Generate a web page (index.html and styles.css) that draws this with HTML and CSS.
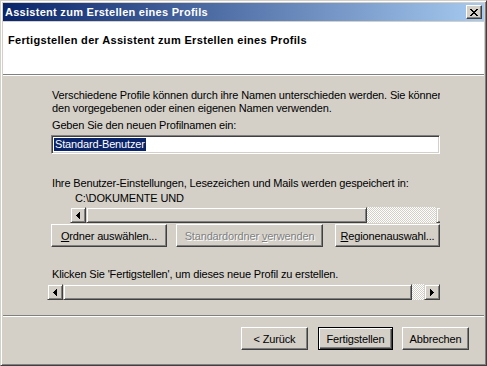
FILE: index.html
```html
<!DOCTYPE html>
<html lang="de">
<head>
    <meta charset="UTF-8">
    <title>Assistent zum Erstellen eines Profils</title>
    <link rel="stylesheet" href="styles.css">
</head>
<body>
    <div class="window">
        <div class="titlebar">
            <span class="title">Assistent zum Erstellen eines Profils</span>
            <button class="close" aria-label="Schließen">
                <svg width="8" height="7" viewBox="0 0 8 7" shape-rendering="crispEdges">
                    <path d="M0 0h2v1H0zM6 0h2v1H6zM1 1h2v1H1zM5 1h2v1H5zM2 2h4v1H2zM3 3h2v1H3zM2 4h4v1H2zM1 5h2v1H1zM5 5h2v1H5zM0 6h2v1H0zM6 6h2v1H6z" fill="#000"/>
                </svg>
            </button>
        </div>

        <div class="header">
            <h1>Fertigstellen der Assistent zum Erstellen eines Profils</h1>
        </div>

        <div class="content">
            <div class="text intro">
                <div>Verschiedene Profile können durch ihre Namen unterschieden werden. Sie können</div>
                <div>den vorgegebenen oder einen eigenen Namen verwenden.</div>
            </div>
            <div class="text label">Geben Sie den neuen Profilnamen ein:</div>
            <div class="field"><span class="sel">Standard-Benutzer</span></div>

            <div class="text store">Ihre Benutzer-Einstellungen, Lesezeichen und Mails werden gespeichert in:</div>
            <div class="path-box">
                <div class="path">C:\DOKUMENTE UND</div>
                <div class="scroll path-scroll">
                    <div class="arrow">
                        <svg width="4" height="7" viewBox="0 0 4 7" shape-rendering="crispEdges"><path d="M0 3h1v1H0zM1 2h1v3H1zM2 1h1v5H2zM3 0h1v7H3z" fill="#000"/></svg>
                    </div>
                    <div class="thumb" style="width: 281px"></div>
                    <div class="track"></div>
                    <div class="arrow">
                        <svg width="4" height="7" viewBox="0 0 4 7" shape-rendering="crispEdges"><path d="M0 0h1v7H0zM1 1h1v5H1zM2 2h1v3H2zM3 3h1v1H3z" fill="#000"/></svg>
                    </div>
                </div>
            </div>

            <div class="btn-row">
                <button class="btn btn-folder"><u>O</u>rdner auswählen...</button>
                <button class="btn btn-default-folder" disabled>Standardordner <u>v</u>erwenden</button>
                <button class="btn btn-region"><u>R</u>egionenauswahl...</button>
            </div>

            <div class="text note">Klicken Sie 'Fertigstellen', um dieses neue Profil zu erstellen.</div>
            <div class="scroll wide-scroll">
                <div class="arrow">
                    <svg width="4" height="7" viewBox="0 0 4 7" shape-rendering="crispEdges"><path d="M0 3h1v1H0zM1 2h1v3H1zM2 1h1v5H2zM3 0h1v7H3z" fill="#000"/></svg>
                </div>
                <div class="thumb" style="width: 349px"></div>
                <div class="track"></div>
                <div class="arrow">
                    <svg width="4" height="7" viewBox="0 0 4 7" shape-rendering="crispEdges"><path d="M0 0h1v7H0zM1 1h1v5H1zM2 2h1v3H2zM3 3h1v1H3z" fill="#000"/></svg>
                </div>
            </div>
        </div>

        <div class="footer">
            <div class="footer-buttons">
                <button class="btn btn-back">&lt; Zurück</button>
                <button class="btn btn-finish default">Fertigstellen</button>
                <button class="btn btn-cancel">Abbrechen</button>
            </div>
        </div>
    </div>
</body>
</html>
```

FILE: styles.css
```css
* {
    margin: 0;
    padding: 0;
    box-sizing: border-box;
}

body {
    font-family: Tahoma, "Liberation Sans", Arial, sans-serif;
    font-size: 11px;
    letter-spacing: -0.15px;
    color: #000;
    background: #d4d0c8;
}

.window {
    width: 487px;
    height: 366px;
    display: flex;
    flex-direction: column;
    background: #d4d0c8;
    border: 1px solid;
    border-color: #d4d0c8 #404040 #404040 #d4d0c8;
    box-shadow: inset 1px 1px #fff, inset -1px -1px #808080;
    padding: 2px;
}

/* title bar */
.titlebar {
    flex: none;
    height: 18px;
    margin-bottom: 1px;
    padding: 0 2px;
    display: flex;
    align-items: center;
    justify-content: space-between;
    background: linear-gradient(to right, #0a246a, #a6caf0);
    color: #fff;
    font-weight: bold;
    letter-spacing: 0.28px;
}

.title {
    line-height: 18px;
}

.close {
    width: 16px;
    height: 14px;
    display: flex;
    align-items: center;
    justify-content: center;
    background: #d4d0c8;
    border: 1px solid;
    border-color: #fff #404040 #404040 #fff;
    box-shadow: inset -1px -1px #808080;
}

.close svg {
    display: block;
}

/* white header */
.header {
    flex: none;
    height: 53px;
    background: #fff;
    border-bottom: 1px solid #808080;
    padding: 12px 5px 0;
}

.header h1 {
    font-size: 11px;
    font-weight: bold;
    line-height: 13px;
    letter-spacing: 0.33px;
}

/* page body */
.content {
    flex: 1;
    border-top: 1px solid #fff;
    padding: 13px 0 0 48px;
}

.text {
    line-height: 13px;
    padding-left: 1px;
}

.intro {
    width: 389px;
    white-space: nowrap;
    overflow: hidden;
}

.label {
    margin-top: 4px;
}

.field {
    margin-top: 3px;
    width: 389px;
    height: 19px;
    background: #fff;
    border: 1px solid;
    border-color: #808080 #fff #fff #808080;
    box-shadow: inset 1px 1px #404040, inset -1px -1px #d4d0c8;
    padding: 2px 0 0 2px;
}

.sel {
    display: inline-block;
    line-height: 13px;
    padding: 0 1px;
    background: #0a246a;
    color: #fff;
}

.store {
    margin-top: 23px;
}

.path-box {
    margin-left: 19px;
    width: 370px;
    overflow: hidden;
}

.path {
    height: 17px;
    padding: 2px 0 0 5px;
    line-height: 13px;
    white-space: nowrap;
    overflow: hidden;
}

/* scroll bars */
.scroll {
    display: flex;
    height: 16px;
}

.path-scroll {
    width: 382px;
}

.wide-scroll {
    margin: 3px 0 0 -4px;
    width: 393px;
}

.arrow,
.thumb {
    height: 16px;
    background: #d4d0c8;
    border: 1px solid;
    border-color: #d4d0c8 #404040 #404040 #d4d0c8;
    box-shadow: inset 1px 1px #fff, inset -1px -1px #808080;
}

.arrow {
    width: 16px;
    flex: none;
    display: flex;
    align-items: center;
    justify-content: center;
}

.arrow svg {
    display: block;
}

.thumb {
    flex: none;
}

.track {
    flex: 1;
    background: conic-gradient(#fff 25%, #d4d0c8 0 50%, #fff 0 75%, #d4d0c8 0);
    background-size: 2px 2px;
}

/* push buttons */
.btn {
    height: 23px;
    font: inherit;
    letter-spacing: inherit;
    color: #000;
    text-align: center;
    background: #d4d0c8;
    border: 1px solid;
    border-color: #fff #404040 #404040 #fff;
    box-shadow: inset -1px -1px #808080;
}

.btn:disabled {
    color: #808080;
    text-shadow: 1px 1px #fff;
}

.btn.default {
    border-color: #000;
    box-shadow: inset 1px 1px #fff, inset -1px -1px #404040, inset -2px -2px #808080;
}

.btn-row {
    display: flex;
    margin-top: 1px;
}

.btn-folder {
    width: 116px;
}

.btn-default-folder {
    width: 147px;
    margin-left: 9px;
}

.btn-region {
    width: 105px;
    margin-left: 12px;
}

.note {
    margin-top: 21px;
}

/* footer */
.footer {
    flex: none;
    height: 48px;
    border-top: 1px solid #808080;
}

.footer-buttons {
    display: flex;
    justify-content: flex-end;
    border-top: 1px solid #fff;
    padding: 10px 15px 0 0;
}

.btn-back {
    width: 67px;
}

.btn-finish {
    width: 75px;
    margin-left: 10px;
}

.btn-cancel {
    width: 67px;
    margin-left: 9px;
}
```
